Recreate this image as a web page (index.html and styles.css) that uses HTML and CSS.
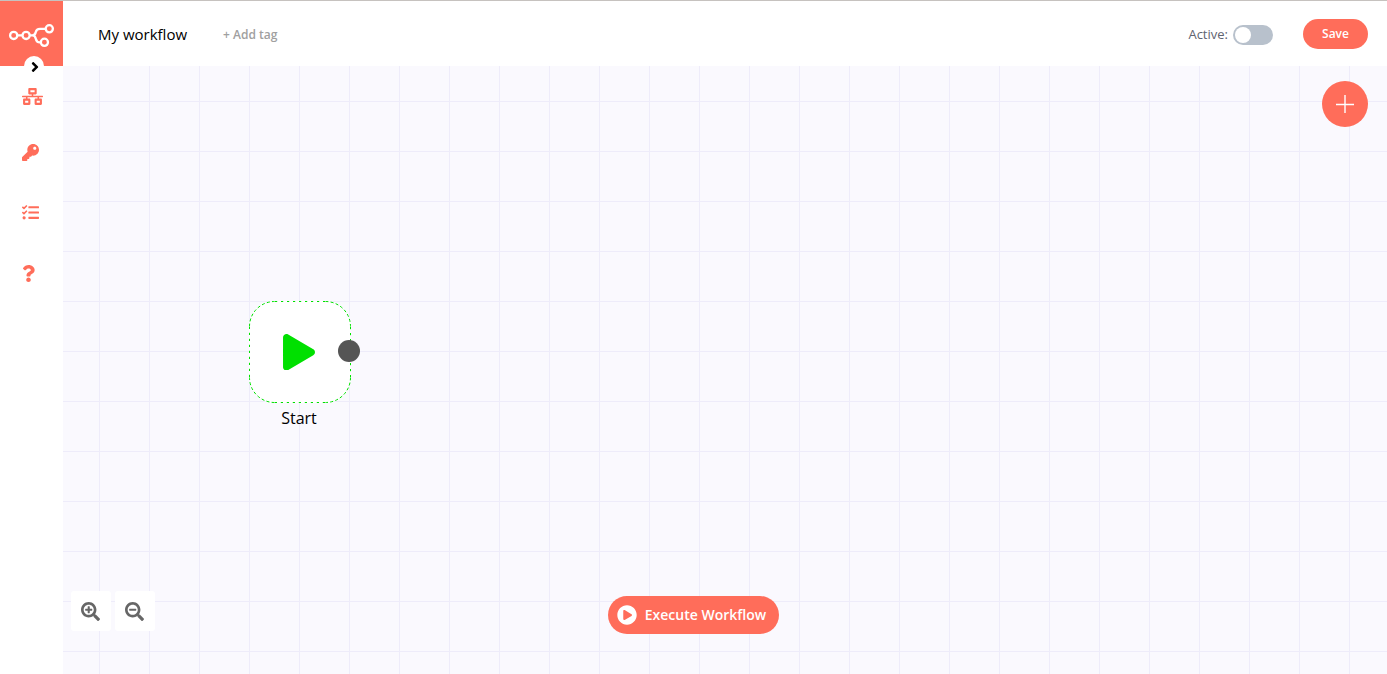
FILE: index.html
```html
<!DOCTYPE html>
<html lang="en">
<head>
<meta charset="utf-8">
<title>My workflow</title>
<link rel="stylesheet" href="styles.css">
</head>
<body>
<div class="app">
  <aside class="sidebar">
    <div class="logo">
      <svg width="63" height="65" viewBox="0 1 63 65" fill="none" stroke="#fff" stroke-width="2.3">
        <circle cx="13.7" cy="35.4" r="3.6"/><circle cx="26.1" cy="35.4" r="3.6"/>
        <circle cx="49.3" cy="28.8" r="3.6"/><circle cx="44.4" cy="42.3" r="3.6"/>
        <path d="M17.4 35.4h4.9M29.9 35.4h2.4M45.5 28.8H40q-3.5 0-4.2 3.2-.7 3.4-3.5 3.4 2.8 0 3.5 3.4.7 3.6 4.2 3.6h.6"/>
      </svg>
      <div class="expander">
        <svg width="8" height="16" viewBox="0 0 256 512"><path d="M224.3 273l-136 136c-9.4 9.4-24.6 9.4-33.9 0l-22.6-22.6c-9.4-9.4-9.4-24.6 0-33.9l96.4-96.4-96.4-96.4c-9.4-9.4-9.4-24.6 0-33.9L54.3 103c9.4-9.4 24.6-9.4 33.9 0l136 136c9.5 9.4 9.5 24.6.1 34z"/></svg>
      </div>
    </div>
    <nav class="menu">
      <svg class="workflows" width="21" height="17" viewBox="0 0 640 512"><path d="M640 264v-16c0-8.84-7.16-16-16-16H344v-40h72c17.67 0 32-14.33 32-32V32c0-17.67-14.33-32-32-32H224c-17.67 0-32 14.33-32 32v128c0 17.67 14.33 32 32 32h72v40H16c-8.84 0-16 7.16-16 16v16c0 8.84 7.16 16 16 16h104v40H64c-17.67 0-32 14.33-32 32v128c0 17.67 14.33 32 32 32h160c17.67 0 32-14.33 32-32V352c0-17.67-14.33-32-32-32h-56v-40h304v40h-56c-17.67 0-32 14.33-32 32v128c0 17.67 14.33 32 32 32h160c17.67 0 32-14.33 32-32V352c0-17.67-14.33-32-32-32h-56v-40h104c8.84 0 16-7.16 16-16zM256 128V64h128v64H256zm-64 320H96v-64h96v64zm352 0h-96v-64h96v64z"/></svg>
      <svg class="credentials" width="17" height="17" viewBox="0 0 512 512"><path d="M512 176.001C512 273.203 433.202 352 336 352c-11.22 0-22.19-1.062-32.827-3.069l-24.012 27.014A23.999 23.999 0 0 1 261.223 384H224v40c0 13.255-10.745 24-24 24h-40v40c0 13.255-10.745 24-24 24H24c-13.255 0-24-10.745-24-24v-78.059c0-6.365 2.529-12.47 7.029-16.971l161.802-161.802C163.108 213.814 160 195.271 160 176 160 78.798 238.797.001 335.999 0 433.488-.001 512 78.511 512 176.001zM336 128c0 26.51 21.49 48 48 48s48-21.49 48-48-21.49-48-48-48-48 21.49-48 48z"/></svg>
      <svg class="executions" width="17" height="17" viewBox="0 0 512 512"><path d="M139.61 35.5a12 12 0 0 0-17 0L58.93 98.81l-22.7-22.12a12 12 0 0 0-17 0L3.53 92.41a12 12 0 0 0 0 17l47.59 47.4a12.78 12.78 0 0 0 17.61 0l15.59-15.62L156.52 69a12.09 12.09 0 0 0 .09-17zm0 159.19a12 12 0 0 0-17 0l-63.68 63.72-22.7-22.1a12 12 0 0 0-17 0L3.53 252a12 12 0 0 0 0 17L51 316.5a12.77 12.77 0 0 0 17.6 0l15.7-15.69 72.2-72.22a12 12 0 0 0 .09-16.9zM64 368c-26.49 0-48.59 21.5-48.59 48S37.53 464 64 464a48 48 0 0 0 0-96zm432 16H208a16 16 0 0 0-16 16v32a16 16 0 0 0 16 16h288a16 16 0 0 0 16-16v-32a16 16 0 0 0-16-16zm0-320H208a16 16 0 0 0-16 16v32a16 16 0 0 0 16 16h288a16 16 0 0 0 16-16V80a16 16 0 0 0-16-16zm0 160H208a16 16 0 0 0-16 16v32a16 16 0 0 0 16 16h288a16 16 0 0 0 16-16v-32a16 16 0 0 0-16-16z"/></svg>
      <svg class="help" width="13" height="17" viewBox="0 0 384 512"><path d="M202.021 0C122.202 0 70.503 32.703 29.914 91.026c-7.363 10.58-5.093 25.086 5.178 32.874l43.138 32.709c10.373 7.865 25.132 6.026 33.253-4.148 25.049-31.381 43.63-49.449 82.757-49.449 30.764 0 68.816 19.799 68.816 49.631 0 22.552-18.617 34.134-48.993 51.164-35.423 19.86-82.299 44.576-82.299 106.405V320c0 13.255 10.745 24 24 24h72.471c13.255 0 24-10.745 24-24v-5.773c0-42.86 125.268-44.645 125.268-160.627C377.504 66.256 286.902 0 202.021 0zM192 373.459c-38.196 0-69.271 31.075-69.271 69.271 0 38.195 31.075 69.27 69.271 69.27s69.271-31.075 69.271-69.271-31.075-69.27-69.271-69.27z"/></svg>
    </nav>
  </aside>
  <div class="main">
    <header class="header">
      <span class="title">My workflow</span>
      <span class="add-tag">+ Add tag</span>
      <span class="active-label">Active:</span>
      <span class="switch"></span>
      <button class="save">Save</button>
    </header>
    <main class="canvas">
      <div class="node">
        <div class="node-box">
          <svg class="outline" width="102" height="102" viewBox="0 0 102 102">
            <path class="edges" d="M26 .5H76M101.5 26V76M76 101.5H26M.5 76V26"/>
            <path class="corners" d="M.5 25.5a25 25 0 0 1 25-25M76.500 .5a25 25 0 0 1 25 25M101.500 76.500a25 25 0 0 1-25 25M25.500 101.500a25 25 0 0 1-25-25"/>
          </svg>
          <svg width="32" height="36.5" viewBox="0 0 448 512"><path d="M424.4 214.7L72.4 6.6C43.8-10.3 0 6.1 0 47.9V464c0 37.5 40.7 60.1 72.4 41.3l352-208c31.4-18.5 31.5-64.1 0-82.6z"/></svg>
        </div>
        <i class="endpoint"></i>
        <div class="node-name">Start</div>
      </div>
      <button class="add-node" aria-label="Add node">
        <svg width="18" height="18" viewBox="0 0 18 18"><path d="M9 0v18M0 9.5h18"/></svg>
      </button>
      <div class="zoom">
        <button class="zoom-btn" aria-label="Zoom in"><svg width="19" height="19" viewBox="0 0 512 512"><path d="M304 192v32c0 6.6-5.4 12-12 12h-56v56c0 6.6-5.4 12-12 12h-32c-6.6 0-12-5.4-12-12v-56h-56c-6.6 0-12-5.4-12-12v-32c0-6.6 5.4-12 12-12h56v-56c0-6.6 5.4-12 12-12h32c6.6 0 12 5.4 12 12v56h56c6.6 0 12 5.4 12 12zm201 284.7L476.7 505c-9.4 9.4-24.6 9.4-33.9 0L343 405.3c-4.5-4.5-7-10.6-7-17V372c-35.3 27.6-79.7 44-128 44C93.1 416 0 322.9 0 208S93.1 0 208 0s208 93.1 208 208c0 48.3-16.4 92.7-44 128h16.3c6.4 0 12.5 2.5 17 7l99.7 99.7c9.3 9.4 9.3 24.6 0 34zM344 208c0-75.2-60.8-136-136-136S72 132.8 72 208s60.8 136 136 136 136-60.8 136-136z"/></svg></button>
        <button class="zoom-btn" aria-label="Zoom out"><svg width="19" height="19" viewBox="0 0 512 512"><path d="M304 192v32c0 6.6-5.4 12-12 12H124c-6.6 0-12-5.4-12-12v-32c0-6.6 5.4-12 12-12h168c6.6 0 12 5.4 12 12zm201 284.7L476.7 505c-9.4 9.4-24.6 9.4-33.9 0L343 405.3c-4.5-4.5-7-10.6-7-17V372c-35.3 27.6-79.7 44-128 44C93.1 416 0 322.9 0 208S93.1 0 208 0s208 93.1 208 208c0 48.3-16.4 92.7-44 128h16.3c6.4 0 12.5 2.5 17 7l99.7 99.7c9.3 9.4 9.3 24.6 0 34zM344 208c0-75.2-60.8-136-136-136S72 132.8 72 208s60.8 136 136 136 136-60.8 136-136z"/></svg></button>
      </div>
      <button class="execute">
        <svg width="20" height="20" viewBox="0 0 512 512"><path d="M256 8C119 8 8 119 8 256s111 248 248 248 248-111 248-248S393 8 256 8zm115.7 272l-176 101c-15.8 8.8-35.7-2.5-35.7-21V152c0-18.4 19.8-29.8 35.7-21l176 107c16.4 9.2 16.4 32.9 0 42z"/></svg>
        <span>Execute Workflow</span>
      </button>
    </main>
  </div>
</div>
</body>
</html>
```
FILE: styles.css
```css
* { box-sizing: border-box; }
body { margin: 0; background: #fff; font-family: "Open Sans", sans-serif; }
svg { display: block; }
button { border: 0; padding: 0; font-family: inherit; color: #fff; background: #ff6d5a; display: flex; align-items: center; justify-content: center; }
.app { display: flex; height: 674px; border-top: 1px solid #c6c2bf; overflow: hidden; }
.sidebar { width: 63px; flex: none; background: #fff; }
.logo { position: relative; height: 65px; background: #ff6d5a; }
.expander { position: absolute; left: 24px; top: 55px; width: 20px; height: 20px; border-radius: 50%; background: #fff; display: flex; align-items: center; justify-content: center; padding: 2px 0 0 2px; }
.menu { display: flex; flex-direction: column; padding: 22px 0 0 22px; fill: #ff6d5a; }
.credentials { margin-top: 39px; }
.executions { margin-top: 43px; }
.help { margin-top: 44px; }
.main { flex: 1; display: flex; flex-direction: column; }
.header { height: 65px; flex: none; display: flex; align-items: center; padding: 1px 19px 0 35px; }
.title { font-size: 15px; line-height: 20px; color: #000; }
.add-tag { margin-left: 36px; padding-top: 1px; font-size: 12px; font-weight: 600; line-height: 20px; color: #a0a0a0; }
.active-label { margin-left: auto; font-size: 13px; line-height: 20px; color: #606470; }
.switch { margin-left: 5px; width: 40px; height: 20px; border-radius: 10px; background: #b8c1cc; padding: 2px; margin-top: 1px; }
.switch::before { content: ""; display: block; width: 16px; height: 16px; border-radius: 50%; background: #fff; }
.save { margin: -1px 0 0 30px; width: 65px; height: 30px; border-radius: 15px; font-size: 12px; font-weight: 600; }
.canvas { position: relative; flex: 1; background-color: #faf9fe; background-image: linear-gradient(to right, #eeecfa 1px, transparent 1px), linear-gradient(to bottom, #eeecfa 1px, transparent 1px); background-size: 50px 50px; background-position: 36px 35px; }
.node { position: absolute; left: 186px; top: 235px; width: 102px; text-align: center; }
.node-box { position: relative; height: 102px; border-radius: 25px; background: #fff; display: flex; align-items: center; justify-content: center; padding-right: 3px; fill: #00e000; }
.outline { position: absolute; left: 0; top: 0; fill: none; stroke: #00e000; stroke-width: 1; }
.edges { stroke-dasharray: 2.2 3.8; }
.corners { stroke-dasharray: 3 2.2; }
.endpoint { position: absolute; left: 89px; top: 39px; width: 22px; height: 22px; border-radius: 50%; background: #555; }
.node-name { margin-top: 3px; padding-right: 2px; font-size: 16px; line-height: 24px; color: #000; }
.add-node { position: absolute; right: 19px; top: 15px; width: 46px; height: 46px; border-radius: 50%; }
.add-node path { stroke: #fff; stroke-width: 1.4; }
.zoom { position: absolute; left: 8px; top: 525px; display: flex; gap: 4px; }
.zoom-btn { width: 40px; height: 40px; border-radius: 3px; background: #fff; fill: #666; padding-right: 1px; }
.execute { position: absolute; left: 545px; top: 530px; width: 171px; height: 38px; border-radius: 19px; gap: 8px; font-size: 14px; font-weight: 600; fill: #fff; padding-right: 4px; }
.execute span { padding-bottom: 2px; }
```
